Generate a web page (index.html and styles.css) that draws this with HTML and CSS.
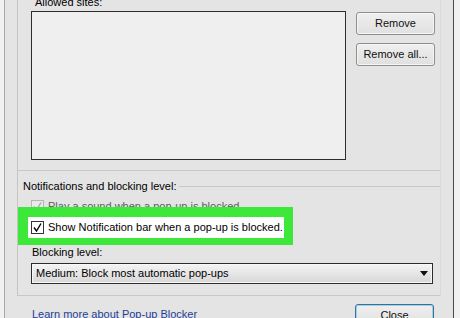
FILE: index.html
```html
<!doctype html>
<html lang="en">
    <head>
        <meta charset="UTF-8" />
        <meta name="viewport" content="width=device-width, initial-scale=1.0" />
        <title>Pop-up Blocker Settings</title>
        <link rel="stylesheet" href="styles.css">
    </head>
    <body>
        <div class="dialog">
            <div class="frame">
                <section class="exceptions">
                    <div class="caption caption-sites">Allowed sites:</div>
                    <div class="sites-row">
                        <div class="site-list"></div>
                        <div class="side-buttons">
                            <button class="btn">Remove</button>
                            <button class="btn">Remove all...</button>
                        </div>
                    </div>
                </section>

                <section class="notify">
                    <div class="group-title">
                        <span>Notifications and blocking level:</span>
                    </div>

                    <label class="check check-disabled">
                        <span class="box">
                            <svg viewBox="0 0 13 13" width="13" height="13"><polyline points="3,6.5 5.5,10 10,2.5" /></svg>
                        </span>
                        Play a sound when a pop-up is blocked.
                    </label>

                    <div class="highlight">
                        <label class="check">
                            <span class="box">
                                <svg viewBox="0 0 13 13" width="13" height="13"><polyline points="3,6.5 5.5,10 10,2.5" /></svg>
                            </span>
                            Show Notification bar when a pop-up is blocked.
                        </label>
                    </div>

                    <div class="caption caption-level">Blocking level:</div>
                    <div class="select">
                        <span class="select-text">Medium: Block most automatic pop-ups</span>
                        <span class="select-arrow">
                            <svg viewBox="0 0 8 6" width="8" height="6"><polygon points="0,0 8,0 4,5" /></svg>
                        </span>
                    </div>
                </section>
            </div>

            <div class="footer">
                <a class="learn" href="#">Learn more about Pop-up Blocker</a>
                <button class="btn btn-default">Close</button>
            </div>
        </div>
    </body>
</html>
```

FILE: styles.css
```css
html,
body {
    margin: 0;
    height: 100%;
}

body {
    font-family: 'Liberation Sans', Arial, sans-serif;
    font-size: 11px;
    line-height: 13px;
    color: #000;
    background: #f1f1f1;
    overflow: hidden;
}

.dialog {
    box-sizing: border-box;
    width: 450px;
    height: 330px;
    margin-left: 4px;
    padding-left: 12px;
    border-left: 1px solid #a9a9a9;
    border-right: 1px solid #4a4a4a;
    background: #e4e4e4;
}

.frame {
    width: 424px;
    box-sizing: border-box;
    margin-top: -4px;
    border-left: 1px solid #c4c4c4;
    border-right: 1px solid #dadada;
    border-bottom: 1px solid #c8c8c8;
}

.caption {
    height: 13px;
}

.caption-sites {
    padding-left: 4px;
    margin-bottom: 2px;
}

.exceptions {
    padding: 0 0 10px 13px;
    border-bottom: 1px solid #c8c8c8;
}

.sites-row {
    display: flex;
    gap: 10px;
}

.site-list {
    width: 315px;
    height: 149px;
    box-sizing: border-box;
    border: 1px solid #2e2e2e;
    background: #efefef;
}

.side-buttons {
    display: flex;
    flex-direction: column;
    gap: 8px;
    margin-top: 1px;
}

.btn {
    width: 79px;
    height: 23px;
    box-sizing: border-box;
    padding: 0;
    font: inherit;
    color: #111;
    border: 1px solid #8e8e8e;
    border-radius: 3px;
    background: linear-gradient(#efefef, #e0e0e0);
    box-shadow: inset 0 0 0 1px #f6f6f6;
}

.btn-default {
    border-color: #3a6f96;
    box-shadow: inset 0 0 0 1px #9fd0ee;
}

.notify {
    padding-bottom: 11px;
}

.group-title {
    display: flex;
    align-items: center;
    gap: 3px;
    margin-top: 9px;
    padding-left: 5px;
}

.group-title::after {
    content: '';
    flex: 1;
    border-top: 1px solid #c8c8c8;
}

.check {
    display: flex;
    align-items: center;
    gap: 4px;
    height: 13px;
    padding-left: 13px;
    margin-top: 7px;
}

.box {
    width: 13px;
    height: 13px;
    box-sizing: border-box;
    border: 1px solid #333;
    background: #fff;
}

.box svg {
    display: block;
    margin: -1px;
    fill: none;
    stroke: #000;
    stroke-width: 1.4;
}

.check-disabled {
    color: #5e5e5e;
}

.check-disabled .box {
    border-color: #b5b5b5;
    background: #eaeaea;
}

.check-disabled .box svg {
    stroke: #a8a8a8;
}

.highlight {
    position: relative;
    width: 275px;
    box-sizing: border-box;
    margin-top: -6px;
    border: solid #3ee83a;
    border-width: 10px 9px 7px 10px;
    background: #fff;
}

.highlight .check {
    height: 21px;
    margin: 0;
    padding-left: 3px;
}

.caption-level {
    padding-left: 14px;
    margin-top: 1px;
}

.select {
    display: flex;
    align-items: center;
    width: 402px;
    height: 21px;
    box-sizing: border-box;
    margin: 4px 0 0 13px;
    padding: 0 2px 0 4px;
    border: 1px solid #2c2c2c;
    background: linear-gradient(#f4f4f4, #e6e6e6 50%, #d6d6d6);
    box-shadow: inset 0 0 0 1px #f8f8f8;
}

.select-text {
    flex: 1;
}

.select-arrow {
    display: flex;
    align-items: center;
    justify-content: center;
    width: 12px;
    height: 15px;
}

.select-arrow svg {
    fill: #111;
}

.footer {
    display: flex;
    align-items: flex-start;
    width: 424px;
}

.learn {
    margin: 12px 0 0 15px;
    color: #1d3f95;
    text-decoration: none;
}

.footer .btn {
    margin: 8px 7px 0 auto;
}
```
